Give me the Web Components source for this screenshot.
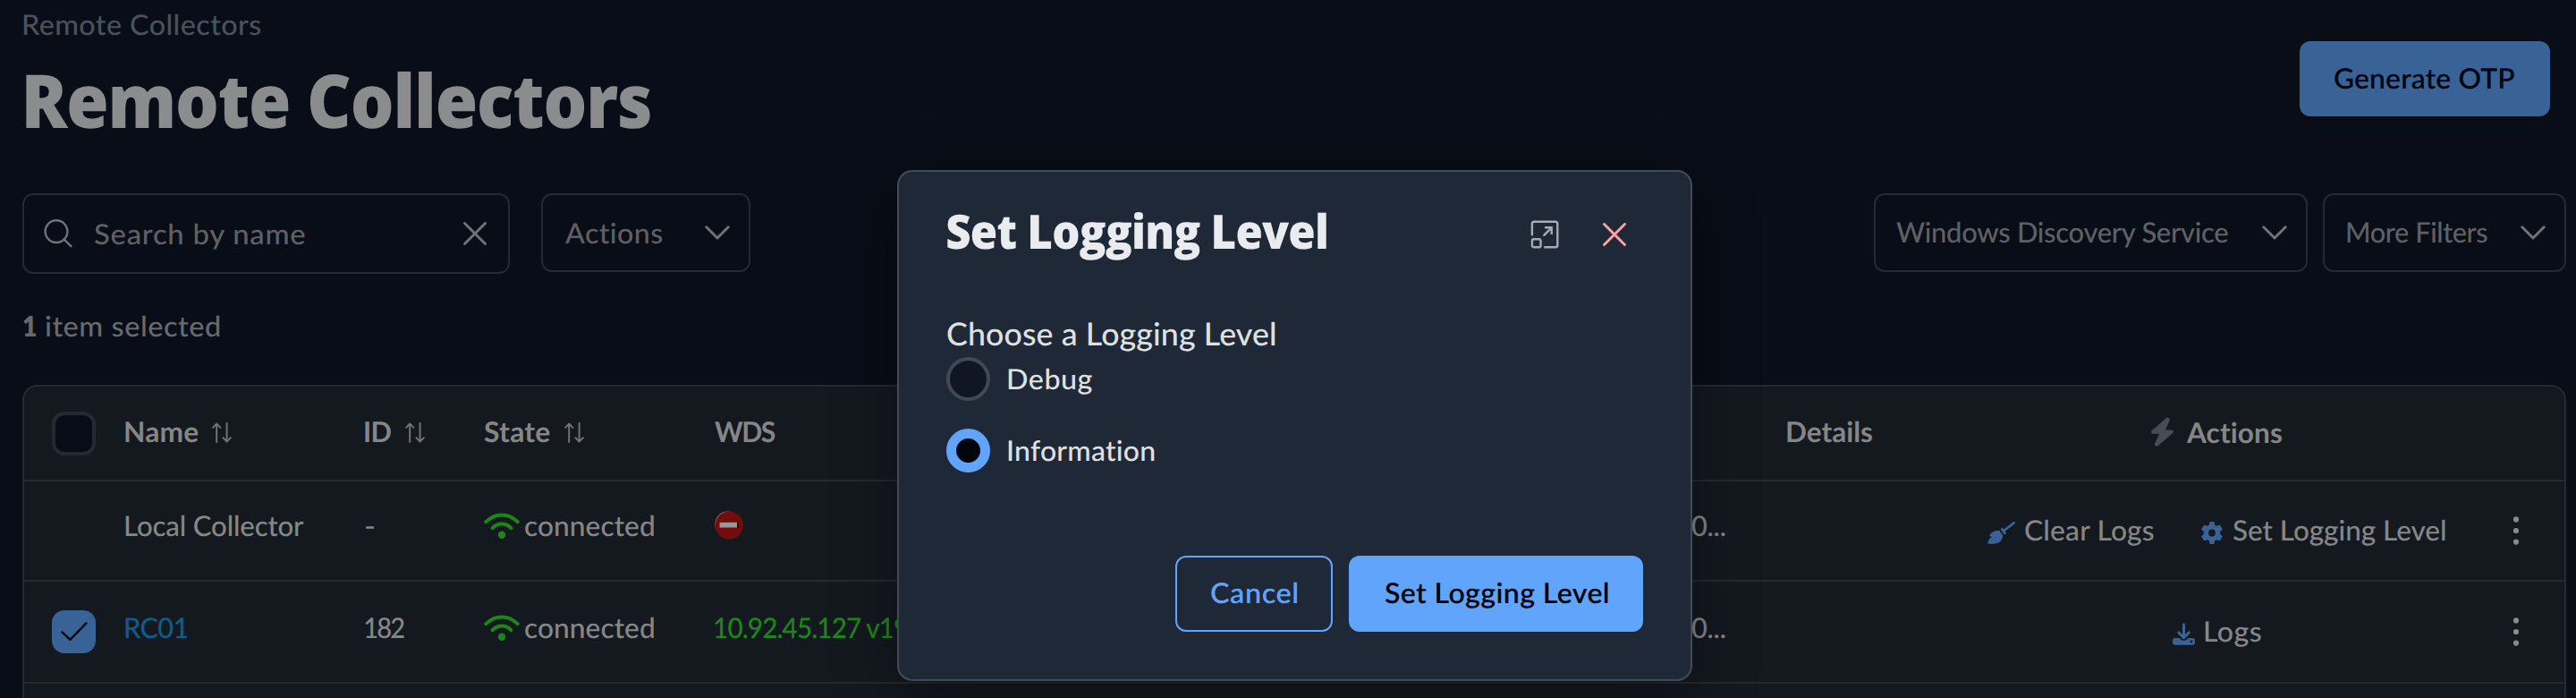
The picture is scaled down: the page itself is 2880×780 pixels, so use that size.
<!DOCTYPE html>
<html lang="en">
<head>
<meta charset="utf-8">
<title>Remote Collectors</title>
<style>
html, body { margin: 0; height: 780px; overflow: hidden; background: #080d17; }
body { font-family: Lato, "Open Sans", sans-serif; font-size: 31.5px; font-weight: 500; color: #868686; text-rendering: geometricPrecision; }
</style>
</head>
<body>
<collectors-app></collectors-app>
<script>
const define = (name, css, html, setup) => customElements.define(name, class extends HTMLElement {
  connectedCallback() {
    if (this.shadowRoot) return;
    const t = document.createElement('template');
    t.innerHTML = `<style>*{box-sizing:border-box}${css}</style>${html}`;
    this.attachShadow({ mode: 'open' }).append(t.content.cloneNode(true));
    if (setup) setup(this, this.shadowRoot);
  }
});

/* A single line of text whose inked width is `w` pixels. The difference from the natural
   width is shared between glyph width and tracking; with `squeeze` the tracking is fixed. */
const pen = document.createElement('canvas').getContext('2d');
define('fit-text', `
  :host { display: block; flex: none; line-height: 40px; white-space: pre; }
  span { display: block; transform-origin: 0 50%; }`,
  `<span><slot></slot></span>`, (el, root) => {
    const cs = getComputedStyle(el), text = el.textContent, w = +el.getAttribute('w');
    pen.font = `${cs.fontWeight} ${cs.fontSize} ${cs.fontFamily}`;
    pen.textRendering = 'geometricPrecision';
    const m = pen.measureText(text), ink = m.actualBoundingBoxLeft + m.actualBoundingBoxRight;
    const gaps = Math.max(text.length - 1, 1);
    let k, track;
    if (el.hasAttribute('squeeze')) {
      track = -0.015 * parseFloat(cs.fontSize);
      k = w / (ink + gaps * track);
    } else {
      k = Math.sqrt(w / ink);
      track = (w / k - ink) / gaps;
    }
    el.style.width = w + 'px';
    const span = root.querySelector('span');
    span.style.letterSpacing = track + 'px';
    span.style.transform = `translateX(${m.actualBoundingBoxLeft * k}px) scaleX(${k})`;
  });

const icons = {
  search: ['0 0 32 32', '<g fill="none" stroke="currentColor" stroke-width="2.4" stroke-linecap="round"><circle cx="14" cy="13.6" r="12.4"/><path d="M23 22.8 30.4 30.2"/></g>'],
  close: ['0 0 26 26', '<path d="M1.5 1.5 24.5 24.5M24.5 1.5 1.5 24.5" stroke="currentColor" stroke-width="2.9" stroke-linecap="round"/>'],
  chevron: ['0 0 28 16', '<path d="M1.8 1.8 14 14 26.2 1.8" fill="none" stroke="currentColor" stroke-width="3" stroke-linecap="round" stroke-linejoin="round"/>'],
  sort: ['0 0 22 23', '<path d="M5.2 22V1.6M1.1 5.8 5.2 1.4 9.4 5.8M16.6 .8V21.3M12.4 17.2 16.6 21.5 20.9 17.2" fill="none" stroke="currentColor" stroke-width="1.9" stroke-linejoin="round" stroke-linecap="round"/>'],
  wifi: ['0 0 40 29', '<g fill="none" stroke="currentColor" stroke-width="4" stroke-linecap="round"><path d="M2.3 10.2Q10 2.4 20 2.4T37.7 10.2"/><path d="M9.6 17.1Q14 12.6 20 12.6T30.4 17.1"/></g><circle cx="20" cy="24.7" r="4.2" fill="currentColor"/>'],
  stop: ['0 0 32 32', '<circle cx="14.6" cy="14.8" r="14.2" fill="#8c8c8c"/><circle cx="16.3" cy="16" r="15.6" fill="#740c0c"/><path d="M8 13.2H26.7V19H8z" fill="#300"/><path d="M5.6 12.8H25V18.6H5.6z" fill="#999"/>'],
  bolt: ['0 0 25 33', '<path d="M19.6.9C20.8 1.5 21.1 2.7 20.5 4L15.8 14.5H22.7C24.8 14.5 25.5 16.8 24 18.2L7.6 32.2C6 33.4 3.3 32.3 4.3 29.6L9.1 18.7H2.2C.1 18.7-.6 16.3 1 14.9L17.1 1Q18.3.2 19.6.9Z" fill="currentColor"/>'],
  broom: ['0 0 31 25', '<g fill="currentColor"><path d="M28.4.5C29.4-.2 30.8.1 31 1.1 31 1.8 30.9 2.1 30.4 2.5L20 10.5 20.8 13.2C20.9 13.9 20.4 14.1 19.9 14L18.4 13.9 14.8 8.8 15.2 7.2C15.4 6.6 15.9 6.4 16.4 6.8L18.4 8.3Z"/><path d="M13.2 9.8 17.2 15.2C16.8 18.9 15.2 22.5 11.2 24.1 8.3 25.1 4 25 .8 24.6.1 24.4.1 23.8.3 23.1L2.6 18.5 5 17.3C5.4 17 5.1 16.4 4.6 16.4L2.2 16.5C3.1 12.4 7.6 9.2 13.2 9.8Z"/></g>'],
  gear: ['0 0 24 25', '<path fill-rule="evenodd" fill="currentColor" d="M9.3.8Q9.4.1 10.2.1H13.8Q14.6.1 14.7.8L15.2 3.7 17.2 4.8 20 3.8Q20.8 3.5 21.2 4.2L23.6 8Q24 8.7 23.4 9.2L21.2 11.1V13.9L23.4 15.8Q24 16.3 23.6 17L21.2 20.8Q20.8 21.5 20 21.2L17.2 20.2 15.2 21.3 14.7 24.2Q14.6 24.9 13.8 24.9H10.2Q9.4 24.9 9.3 24.2L8.8 21.3 6.8 20.2 4 21.2Q3.2 21.5 2.8 20.8L.4 17Q0 16.3.6 15.8L2.8 13.9V11.1L.6 9.2Q0 8.7.4 8L2.8 4.2Q3.2 3.5 4 3.8L6.8 4.8 8.8 3.7ZM12 8.6A3.9 3.9 0 1 0 12 16.4 3.9 3.9 0 1 0 12 8.6Z"/>'],
  download: ['0 0 25 25', '<path d="M12.5 1.8V15.8M6.7 10.8 12.5 16.6 18.3 10.8" fill="none" stroke="currentColor" stroke-width="3" stroke-linecap="round" stroke-linejoin="round"/><path fill-rule="evenodd" fill="currentColor" d="M3 17.1H7.2L10.2 19.2Q12.5 20.8 14.8 19.2L17.8 17.1H22Q25 17.1 25 20V21.8Q25 24.8 22 24.8H3Q0 24.8 0 21.8V20Q0 17.1 3 17.1ZM21 19.6A1.3 1.3 0 1 0 21 22.2 1.3 1.3 0 1 0 21 19.6Z"/>'],
  kebab: ['0 0 8 32', '<g fill="currentColor"><circle cx="4" cy="3.4" r="3.1"/><circle cx="4" cy="16" r="3.1"/><circle cx="4" cy="28.6" r="3.1"/></g>'],
  tick: ['0 0 30 22', '<path d="M1.5 11.4 10.4 19.8 28.4 1.4" fill="none" stroke="#02050c" stroke-width="2.4" stroke-linecap="round" stroke-linejoin="round"/>'],
  expand: ['0 0 32 32', '<g fill="none" stroke="currentColor" stroke-width="2.4" stroke-linecap="round" stroke-linejoin="round"><path d="M1.9 16.2V4Q1.9 1.7 4.2 1.7H28Q30.3 1.7 30.3 4V28Q30.3 30.3 28 30.3H16.2"/><rect x="1.9" y="21.3" width="9.6" height="9" rx="1.9"/><path d="M15.3 16.8 22.7 9.4"/><path d="M16 8.3H23.7V16" stroke-linecap="butt" stroke-linejoin="miter"/></g>']
};
define('ui-icon', `:host{display:block;flex:none} svg{display:block;width:100%;height:100%}`, '', (el, root) => {
  const [box, body] = icons[el.getAttribute('name')];
  el.style.width = el.getAttribute('w') + 'px';
  el.style.height = el.getAttribute('h') + 'px';
  root.innerHTML += `<svg viewBox="${box}" preserveAspectRatio="none">${body}</svg>`;
});

define('ui-button', `
  :host { display: flex; flex: none; box-sizing: border-box; align-items: center; justify-content: center; border-radius: 12px; padding-bottom: 3px; font-weight: 600; color: #02060f; background: #61a4fb; }
  :host([kind=muted]) { background: #396396; color: #020610; }
  :host([kind=outline]) { background: none; border: 2px solid #61a4fb; color: #61a4fb; }`, `<slot></slot>`);

define('ui-select', `
  :host { display: flex; flex: none; box-sizing: border-box; height: 88px; align-items: center; justify-content: space-between; border: 2px solid #252932; border-radius: 12px; padding: 0 21px 0 24.5px; color: #5f6062; }
  ui-icon { color: #717275; }`, `<slot></slot><ui-icon name="chevron" w="28" h="16"></ui-icon>`);

define('search-field', `
  :host { display: flex; flex: none; box-sizing: border-box; width: 545px; height: 90px; align-items: center; border: 2px solid #252932; border-radius: 12px; padding: 0 24px 1px 22px; color: #5f6062; }
  .q { margin-right: 24px; color: #717275; } .x { margin-left: auto; color: #717275; }`,
  `<ui-icon class="q" name="search" w="32" h="32"></ui-icon><slot></slot><ui-icon class="x" name="close" w="26" h="26"></ui-icon>`);

define('page-header', `
  :host { display: flex; justify-content: space-between; align-items: flex-start; height: 216px; box-sizing: border-box; padding: 0 29px 0 26px; }
  .titles { padding-top: 7px; }
  .crumb { color: #4a515a; font-weight: 500; }
  .title { font: 800 83px/100px "Open Sans", sans-serif; color: #8b8c8e; margin: 15px 0 0 3px; }
  ui-button { width: 280px; height: 84px; margin-top: 46px; }`, `
  <div class="titles">
    <fit-text class="crumb" w="265.5">Remote Collectors</fit-text>
    <fit-text class="title" w="698" squeeze>Remote Collectors</fit-text>
  </div>
  <ui-button kind="muted"><fit-text w="201.5">Generate OTP</fit-text></ui-button>`);

define('filter-bar', `
  :host { display: flex; align-items: flex-start; height: 90px; padding: 0 11px 0 25px; }
  .actions { width: 234px; margin-left: 35px; } .wds { width: 485px; margin-left: auto; } .more { width: 272px; margin-left: 17px; }
  .wds fit-text, .more fit-text { margin-top: -2px; }
  .wds { padding-left: 23px; }`, `
  <search-field><fit-text w="236">Search by name</fit-text></search-field>
  <ui-select class="actions"><fit-text w="109">Actions</fit-text></ui-select>
  <ui-select class="wds"><fit-text w="371">Windows Discovery Service</fit-text></ui-select>
  <ui-select class="more"><fit-text w="157">More Filters</fit-text></ui-select>`);

define('selection-count', `
  :host { display: flex; gap: 12px; padding: 0 26px; height: 40px; margin: 38px 0 46px; color: #68696c; }
  .n { font-weight: 800; }`, `<fit-text class="n" w="13">1</fit-text><fit-text w="194.5">item selected</fit-text>`);

define('check-box', `
  :host { display: flex; box-sizing: border-box; width: 49px; height: 49px; align-items: center; justify-content: center; border: 4px solid #252932; border-radius: 14px; background: #070c16; }
  ui-icon { display: none; }
  :host([checked]) { background: #396396; border-color: #396396; height: 48px; }
  :host([checked]) ui-icon { display: block; }`, `<ui-icon name="tick" w="30" h="22"></ui-icon>`);

define('table-row', `
  :host { display: grid; grid-template-columns: 112.5px 268.5px 133px 258px 1091.5px 107px 160px 641px 1fr; align-items: center; box-sizing: border-box; border-bottom: 2px solid #252932; }
  ::slotted(*) { display: flex; align-items: center; }`, `<slot></slot>`);

define('action-link', `
  :host { display: flex; align-items: center; gap: 11px; }
  ui-icon { color: #396396; margin-top: 6px; }`, `<slot></slot>`, (el, root) => {
    const n = document.createElement('ui-icon');
    n.setAttribute('name', el.getAttribute('icon'));
    for (const a of ['w', 'h']) n.setAttribute(a, el.getAttribute(a));
    root.insertBefore(n, root.querySelector('slot'));
  });

define('collector-table', `
  :host { display: block; box-sizing: border-box; margin: 0 11px 0 25px; height: 420px; border: 2px solid #252932; border-radius: 17px 17px 0 0; background: #141920; overflow: hidden; }
  .head { height: 106px; font-weight: 700; } .r1 { height: 112px; } .r2 { height: 114px; }
  .c { padding-left: 31px; }
  .head .t { padding-bottom: 4px; gap: 16px; } .head .t ui-icon { margin-top: 2px; color: #747577; }
  .r1 .t { padding-bottom: 12px; } .r2 .t { padding-bottom: 10px; }
  .act { justify-content: center; }
  .head .act { gap: 14px; padding-bottom: 2px; } .head .act ui-icon { color: #454d57; margin-top: -1px; }
  .r1 .act { gap: 53px; padding-bottom: 2px; } .r2 .act { padding-bottom: 2px; }
  .k { padding-left: 10.5px; color: #8a8a8a; }
  .wifi { color: #1c8718; margin-right: 6px; }
  .link { color: #0d5c8b; } .ok { color: #1c8718; }
  .last { height: 60px; border: 0; }`, `
  <table-row class="head">
    <div class="c"><check-box></check-box></div>
    <div class="t"><fit-text w="81.5">Name</fit-text><ui-icon name="sort" w="22" h="23"></ui-icon></div>
    <div class="t"><fit-text w="29">ID</fit-text><ui-icon name="sort" w="22" h="23"></ui-icon></div>
    <div class="t"><fit-text w="73.5">State</fit-text><ui-icon name="sort" w="22" h="23"></ui-icon></div>
    <div class="t"><fit-text w="68">WDS</fit-text></div>
    <div></div>
    <div class="t"><fit-text w="95">Details</fit-text></div>
    <div class="act"><ui-icon name="bolt" w="25" h="33"></ui-icon><fit-text w="107.5">Actions</fit-text></div>
    <div></div>
  </table-row>
  <table-row class="r1">
    <div></div>
    <div class="t"><fit-text w="200">Local Collector</fit-text></div>
    <div class="t"><fit-text w="11">-</fit-text></div>
    <div class="t"><ui-icon class="wifi" name="wifi" w="40" h="29"></ui-icon><fit-text w="144">connected</fit-text></div>
    <div class="t"><ui-icon name="stop" w="32" h="32"></ui-icon></div>
    <div class="t"><fit-text w="37.5">0...</fit-text></div>
    <div></div>
    <div class="act">
      <action-link icon="broom" w="31" h="25"><fit-text w="144">Clear Logs</fit-text></action-link>
      <action-link icon="gear" w="24" h="25"><fit-text w="238">Set Logging Level</fit-text></action-link>
    </div>
    <div class="k"><ui-icon name="kebab" w="8" h="32"></ui-icon></div>
  </table-row>
  <table-row class="r2">
    <div class="c"><check-box checked></check-box></div>
    <div class="t link"><fit-text w="70">RC01</fit-text></div>
    <div class="t"><fit-text w="44">182</fit-text></div>
    <div class="t"><ui-icon class="wifi" name="wifi" w="40" h="29"></ui-icon><fit-text w="144">connected</fit-text></div>
    <div class="t ok"><fit-text w="216">10.92.45.127 v19</fit-text></div>
    <div class="t"><fit-text w="37.5">0...</fit-text></div>
    <div></div>
    <div class="act"><action-link icon="download" w="25" h="25"><fit-text w="63">Logs</fit-text></action-link></div>
    <div class="k"><ui-icon name="kebab" w="8" h="32"></ui-icon></div>
  </table-row>
  <table-row class="last"></table-row>`);

define('radio-option', `
  :host { display: flex; align-items: center; gap: 20px; height: 49px; }
  i { box-sizing: border-box; width: 49px; height: 49px; border-radius: 50%; border: 4px solid #404955; background: #101624; }
  :host([checked]) i { border: 11px solid #61a4fb; background: #02050e; }
  ::slotted(*) { padding-bottom: 2px; }`, `<i></i><slot></slot>`);

define('logging-dialog', `
  :host { display: block; position: absolute; left: 1003px; top: 190px; width: 889px; height: 571px; box-sizing: border-box; border: 2px solid #424b57; border-radius: 17px; background: #1f2836; color: #dfe0e2; padding: 36px 53px 0; box-shadow: 0 20px 70px rgba(0,0,0,.38); }
  header { display: flex; height: 60px; align-items: center; padding-right: 19px; }
  .title { font: 800 53px/60px "Open Sans", sans-serif; color: #e9ebee; margin-left: 1px; }
  .tools { display: flex; align-items: center; gap: 49px; margin-left: auto; padding-top: 7px; color: #a6abb2; }
  .close { color: #ffa2a2; }
  .label { font-size: 35.5px; margin: 65px 0 6px 1px; }
  radio-option + radio-option { margin-top: 31px; }
  footer { display: flex; justify-content: flex-end; gap: 18px; margin-top: 93px; }
  ui-button { height: 85px; }
  .cancel { width: 176px; } .ok { width: 329px; }`, `
  <header><fit-text class="title" w="424" squeeze>Set Logging Level</fit-text>
    <div class="tools"><ui-icon name="expand" w="32" h="32"></ui-icon><ui-icon class="close" name="close" w="26" h="26"></ui-icon></div></header>
  <fit-text class="label" w="366">Choose a Logging Level</fit-text>
  <radio-option><fit-text w="94">Debug</fit-text></radio-option>
  <radio-option checked><fit-text w="164">Information</fit-text></radio-option>
  <footer><ui-button class="cancel" kind="outline"><fit-text w="96.5">Cancel</fit-text></ui-button>
  <ui-button class="ok"><fit-text w="250">Set Logging Level</fit-text></ui-button></footer>`);

define('collectors-app', `:host { display: block; position: relative; width: 2880px; height: 780px; overflow: hidden; }`, `
  <page-header></page-header><filter-bar></filter-bar><selection-count></selection-count>
  <collector-table></collector-table><logging-dialog></logging-dialog>`);
</script>
</body>
</html>
